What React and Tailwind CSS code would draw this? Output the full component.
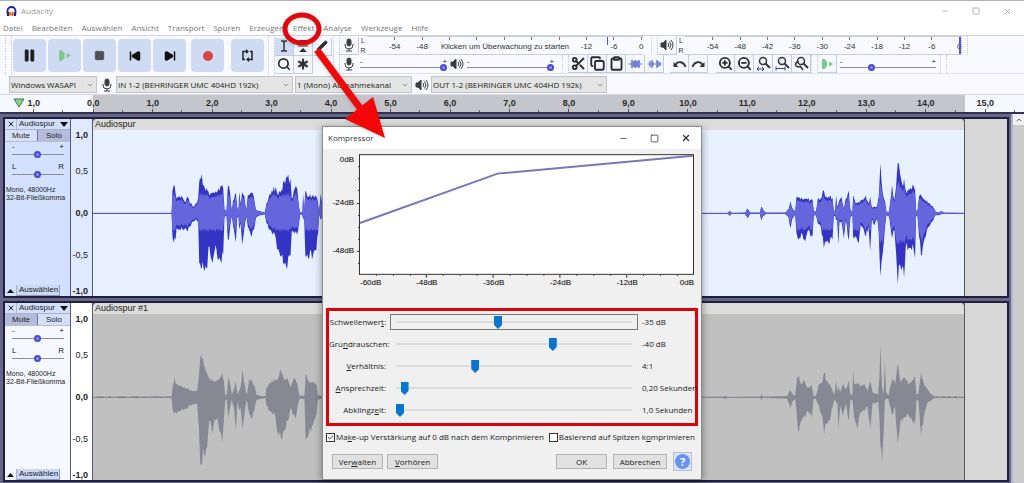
import React from 'react';
import {
    Asterisk, Check, ChevronDown, ChevronUp, Clipboard, Copy, Minus, Pencil, Pause, Scissors, Search,
    SkipBack, SkipForward, Square, X, ZoomIn, ZoomOut,
} from 'lucide-react';

const MENU = ['Datei', 'Bearbeiten', 'Auswählen', 'Ansicht', 'Transport', 'Spuren', 'Erzeugen', 'Effekt', 'Analyse', 'Werkzeuge', 'Hilfe'];

const SECONDS = ['1,0', '0,0', '1,0', '2,0', '3,0', '4,0', '5,0', '6,0', '7,0', '8,0', '9,0', '10,0', '11,0', '12,0', '13,0', '14,0', '15,0'];

const METER_DB = ['-54', '-48', '-42', '-36', '-30', '-24', '-18', '-12', '-6', '0'];

// Envelope points: [x, level above zero, level below zero]
const SELECTED_WAVE = [
    [279, 1, 1], [515, 1, 1], [518, 70, 75], [522, 87, 88], [527, 60, 80], [530, 45, 45], [536, 50, 50], [548, 48, 48],
    [555, 35, 45], [563, 50, 55], [570, 30, 40], [575, 30, 30], [580, 20, 25], [590, 30, 20], [595, 45, 25], [598, 95, 150],
    [606, 120, 165], [611, 85, 165], [614, 80, 175], [622, 70, 165], [626, 65, 100], [632, 60, 130], [638, 62, 150],
    [644, 60, 115], [650, 62, 110], [656, 75, 140], [665, 82, 150], [670, 75, 125], [674, 10, 10], [680, 8, 8], [684, 80, 80],
    [687, 85, 80], [691, 60, 40], [696, 8, 8], [700, 40, 40], [708, 62, 88], [712, 20, 15], [716, 8, 8], [718, 65, 50],
    [722, 30, 30], [727, 65, 95], [733, 55, 50], [740, 10, 10], [744, 55, 40], [748, 55, 50], [755, 62, 72], [762, 50, 50],
    [768, 12, 15], [775, 8, 8], [795, 3, 3], [800, 30, 30], [810, 60, 50], [828, 80, 75], [832, 60, 110], [845, 70, 130],
    [850, 95, 150], [862, 108, 168], [872, 105, 130], [876, 45, 55], [885, 75, 60], [892, 75, 65], [898, 20, 30], [901, 4, 4],
    [908, 4, 4], [910, 60, 20], [913, 8, 10], [917, 70, 130], [925, 52, 135], [940, 55, 125], [950, 50, 110], [955, 30, 60],
    [958, 3, 3], [963, 60, 20], [970, 2, 2], [2185, 1, 1], [2192, 8, 8], [2197, 1, 1], [2237, 2, 2], [2245, 14, 14],
    [2253, 2, 2], [2282, 2, 2], [2286, 20, 22], [2292, 10, 8], [2300, 2, 2], [2358, 2, 2], [2368, 12, 12], [2374, 36, 45],
    [2380, 15, 15], [2388, 5, 5], [2392, 50, 60], [2397, 48, 80], [2410, 42, 65], [2418, 44, 85], [2425, 42, 55], [2440, 42, 70],
    [2444, 6, 6], [2450, 6, 6], [2456, 45, 30], [2465, 45, 40], [2474, 70, 105], [2478, 50, 85], [2488, 52, 90], [2500, 48, 80],
    [2504, 8, 8], [2508, 8, 8], [2511, 55, 20], [2514, 20, 20], [2518, 30, 95], [2521, 40, 25], [2527, 50, 25], [2534, 15, 75],
    [2540, 45, 20], [2549, 68, 82], [2554, 10, 10], [2560, 5, 5], [2562, 55, 70], [2570, 30, 70], [2579, 35, 90], [2585, 40, 35],
    [2594, 45, 50], [2600, 55, 70], [2608, 30, 40], [2613, 50, 115], [2618, 20, 20], [2626, 20, 35], [2634, 20, 15],
    [2639, 50, 60], [2644, 152, 190], [2651, 60, 120], [2658, 35, 40], [2662, 5, 5], [2670, 5, 10], [2679, 85, 75],
    [2686, 40, 50], [2691, 80, 120], [2696, 152, 215], [2703, 120, 155], [2710, 85, 160], [2715, 105, 195], [2720, 70, 100],
    [2732, 72, 105], [2744, 82, 110], [2748, 70, 135], [2751, 10, 10], [2755, 5, 5], [2760, 50, 70], [2766, 55, 128],
    [2774, 42, 85], [2790, 32, 40], [2803, 18, 20], [2810, 5, 5], [2820, 2, 6], [2828, 8, 2], [2834, 2, 2], [2895, 1, 1],
];

const MUTED_WAVE = [
    [279, 1, 1], [515, 2, 2], [518, 30, 35], [524, 60, 50], [530, 40, 48], [545, 35, 38], [560, 28, 35], [572, 22, 25],
    [585, 18, 20], [592, 20, 22], [597, 60, 90], [601, 120, 200], [604, 130, 205], [612, 100, 170], [622, 70, 150],
    [628, 55, 70], [637, 55, 110], [645, 50, 65], [655, 50, 75], [667, 75, 135], [672, 50, 70], [676, 8, 8], [681, 8, 8],
    [685, 60, 62], [690, 45, 35], [696, 8, 8], [702, 25, 30], [708, 50, 100], [713, 10, 12], [718, 20, 40], [722, 30, 30],
    [728, 85, 95], [735, 35, 40], [741, 8, 8], [748, 52, 50], [757, 52, 65], [766, 30, 25], [770, 8, 8], [783, 4, 4],
    [797, 3, 3], [800, 30, 25], [810, 45, 42], [827, 55, 60], [832, 50, 105], [843, 82, 122], [855, 55, 100], [864, 55, 72],
    [873, 30, 30], [880, 52, 55], [887, 55, 65], [893, 40, 30], [899, 5, 5], [914, 5, 5], [918, 70, 130], [927, 50, 110],
    [940, 45, 80], [950, 40, 50], [954, 8, 8], [970, 2, 2], [2107, 1, 1], [2172, 2, 2], [2178, 5, 5], [2184, 1, 1], [2283, 2, 2],
    [2287, 10, 8], [2290, 2, 2], [2364, 4, 4], [2373, 22, 32], [2380, 10, 12], [2388, 5, 5], [2394, 60, 70], [2399, 65, 105],
    [2406, 40, 70], [2415, 50, 60], [2425, 28, 40], [2438, 35, 60], [2443, 5, 5], [2450, 5, 5], [2460, 40, 30], [2470, 45, 60],
    [2475, 75, 112], [2483, 50, 80], [2492, 40, 70], [2500, 20, 30], [2505, 6, 6], [2511, 50, 15], [2515, 15, 20],
    [2518, 35, 95], [2524, 15, 25], [2531, 40, 55], [2540, 25, 20], [2549, 50, 70], [2554, 8, 8], [2560, 8, 8], [2562, 85, 30],
    [2565, 40, 60], [2574, 45, 95], [2585, 35, 45], [2595, 42, 40], [2605, 20, 30], [2614, 50, 95], [2620, 15, 20],
    [2637, 10, 15], [2641, 60, 60], [2644, 160, 150], [2649, 30, 198], [2654, 10, 100], [2657, 110, 10], [2661, 15, 5],
    [2668, 5, 5], [2679, 60, 55], [2688, 40, 30], [2696, 102, 140], [2704, 50, 75], [2715, 60, 60], [2730, 42, 58],
    [2748, 60, 85], [2752, 8, 8], [2758, 10, 10], [2766, 78, 115], [2774, 45, 60], [2784, 25, 20], [2800, 6, 6], [2810, 2, 2],
    [2895, 1, 1],
];

const JITTER = [1, 0.88, 1.04, 0.93, 1.1, 0.85, 0.98];

// Fills in samples between the envelope points so that the edge looks ragged
const sampleWave = (points) => {
    const samples = [];
    points.slice(1).forEach(([x2, up2, down2], i) => {
        const [x1, up1, down1] = points[i];
        const quiet = up1 < 4 && up2 < 4;
        const steps = quiet ? 1 : Math.max(1, Math.round((x2 - x1) / 3));
        for (let s = 0; s < steps; s += 1) {
            const t = s / steps;
            const n = samples.length;
            samples.push([
                x1 + (x2 - x1) * t,
                (up1 + (up2 - up1) * t) * (s ? JITTER[n % 7] : 1),
                (down1 + (down2 - down1) * t) * (s ? JITTER[(n * 3) % 7] : 1),
            ]);
        }
    });
    samples.push(points[points.length - 1]);
    return samples;
};

const outline = (samples) => {
    const top = samples.map(([x, up]) => `${x} ${-up}`);
    const bottom = samples.map(([x, , down]) => `${x} ${down}`).reverse();
    return `M${top.concat(bottom).join('L')}Z`;
};

const rms = (samples) => samples.map(([x, up, down], i) => {
    const loud = x > 2640;
    const wobble = JITTER[i % 7];
    return [x, Math.min(up * 0.8, (loud ? 90 : 58) * wobble), Math.min(down * 0.75, (loud ? 90 : 52) * wobble)];
});

const Waveform = ({ points, selected }) => {
    const samples = sampleWave(points);
    return (
        <svg className="absolute inset-0 w-full h-full" viewBox="279 -252 2616 502" preserveAspectRatio="none">
            <line x1="279" x2="2895" y1="0" y2="0" stroke={selected ? '#5252b8' : '#8a8a92'} strokeWidth="3" />
            {!selected && <line x1="290" x2="515" y1="0" y2="0" stroke="#505054" strokeWidth="4" strokeDasharray="22 14 6 22 24 16" />}
            {!selected && <line x1="2810" x2="2885" y1="0" y2="0" stroke="#505054" strokeWidth="4" strokeDasharray="10 8" />}
            <path d={outline(samples)} fill={selected ? '#3333c4' : '#888894'} />
            {selected && <path d={outline(rms(samples))} fill="#6666dc" />}
        </svg>
    );
};

const MicIcon = () => (
    <svg className="w-[14px] h-[14px]" viewBox="0 0 14 14" fill="none" stroke="#3c3c3c">
        <rect x="5" y="1" width="4" height="7" rx="2" fill="#3c3c3c" />
        <path d="M3 6v1a4 4 0 0 0 8 0V6M7 11v2M4 13h6" />
    </svg>
);

const SpeakerIcon = () => (
    <svg className="w-[14px] h-[14px]" viewBox="0 0 14 14" fill="none" stroke="#3c3c3c">
        <path d="M1 5h2l3-3v10L3 9H1z" fill="#3c3c3c" />
        <path d="M8 5q1.500 2 0 4M9.500 3.500q3 3.500 0 7M11 2q4 5 0 10" />
    </svg>
);

const PlayAtSpeedIcon = ({ className }) => (
    <svg className={className} viewBox="0 0 14 14" fill="#7cc98a">
        <path d="M2 2h3v10H2zM5 3l2 1.500v5L5 11zM9 4.500l4 2.500-4 2.500z" />
    </svg>
);

const TrimIcon = ({ silence }) => (
    <svg className="w-[15px] h-[14px]" viewBox="0 0 14 14" stroke="#6f7fd0" strokeWidth="1">
        <path d="M0 7h14" />
        {silence
            ? <path d="M2.500 4v6M4.500 3v8M5.500 5v4M9.500 3v8M10.500 4v6M12.500 5v4" strokeWidth="1.500" />
            : <path d="M3.500 3v8M5.500 4v6M7 3v8M8.500 4v6M10.500 3v8" strokeWidth="1.800" />}
    </svg>
);

const UndoIcon = ({ redo }) => (
    <svg className="w-[15px] h-[14px]" viewBox="0 0 14 14" fill="none" stroke="#333">
        <g transform={redo ? 'matrix(-1 0 0 1 14 0)' : undefined}>
            <path d="M3 8c2-4 8-4 10 2" strokeWidth="1.800" />
            <path d="M1 5v5h5z" fill="#333" stroke="none" />
        </g>
    </svg>
);

const ZoomFitIcon = ({ kind }) => (
    <svg className="w-[15px] h-[15px]" viewBox="0 0 15 15" fill="none" stroke="#333" strokeWidth="1.500">
        <circle cx="7" cy="5" r="3.500" />
        <path d="M9.500 7.500 14 12" strokeWidth="2" />
        {kind === 'selection' && <path d="M1 13h7M3 11l-2 2 2 2M6 11l2 2-2 2" stroke="#3a3ab8" strokeWidth="1" />}
        {kind === 'project' && <path d="M1 10.500v4M10 10.500v4M1 12.500h9" stroke="#3a3ab8" strokeWidth="1" />}
        {kind === 'toggle' && <path d="M5 6a2.500 2.500 0 1 0 1 4M6 10l3 4" strokeWidth="1.500" />}
    </svg>
);

const Grip = () => <div className="w-[7px] shrink-0 self-stretch border-x border-dotted border-[#c4c9d6]" />;

const TransportButton = ({ label, children }) => (
    <button type="button" aria-label={label} className="w-[33px] h-[33px] rounded-sm bg-[#cfdbf3] flex items-center justify-center">
        {children}
    </button>
);

const ToolButton = ({ label, active, children }) => (
    <button
        type="button"
        aria-label={label}
        className={`w-[19px] h-[18px] shrink-0 border-r border-b border-[#c3cbe0] flex items-center justify-center ${active ? 'bg-[#cfdbf3]' : 'bg-[#f5f8ff]'}`}
    >
        {children}
    </button>
);

const KnobSlider = ({ label, value, className }) => (
    <input
        type="range"
        aria-label={label}
        defaultValue={value}
        className={`appearance-none bg-transparent h-2 block [&::-webkit-slider-runnable-track]:h-px [&::-webkit-slider-runnable-track]:bg-[#8b8d9c] [&::-webkit-slider-thumb]:appearance-none [&::-webkit-slider-thumb]:w-[7px] [&::-webkit-slider-thumb]:h-[7px] [&::-webkit-slider-thumb]:-mt-[3px] [&::-webkit-slider-thumb]:rounded-full [&::-webkit-slider-thumb]:bg-[#9090e8] [&::-webkit-slider-thumb]:border-2 [&::-webkit-slider-thumb]:border-[#4a4acc] ${className}`}
    />
);

const LabelledKnob = ({ label, value, low = '-', high = '+', className }) => (
    <div className={className}>
        <div className="flex justify-between text-[8px] leading-[7px] text-[#222]">
            <span>{low}</span>
            <span>{high}</span>
        </div>
        <KnobSlider label={label} value={value} className="w-full" />
    </div>
);

const Meter = ({ recording }) => (
    <div className="flex items-stretch h-[19px] font-['Liberation_Sans',sans-serif] text-[8px] text-[#333]">
        <div className="flex flex-col justify-between w-[8px] text-[7px] leading-[9px] text-center">
            <span>L</span>
            <span>R</span>
        </div>
        <div className="relative w-[276px] border-y border-[#c9cdd8]">
            <div className="grid grid-cols-10 pl-[14px] -mr-[12px]">
                {METER_DB.map((db, i) => (
                    <div key={db} className="flex flex-col items-center leading-[9px]">
                        <span className="w-px h-[3px] bg-[#777]" />
                        <span className={recording && i > 1 && i < 7 ? 'invisible' : 'mt-[2px]'}>{db}</span>
                    </div>
                ))}
            </div>
            {recording && (
                <span className="absolute inset-x-0 top-[5px] text-center whitespace-nowrap leading-[9px]">Klicken um Überwachung zu starten</span>
            )}
            <span className={`absolute top-0 bg-[#5555c4] ${recording ? 'right-[35px] w-px h-2' : 'right-0 w-[2px] h-full'}`} />
        </div>
    </div>
);

const DeviceSelect = ({ label, value, className }) => (
    <div className={`relative shrink-0 ${className}`}>
        <select aria-label={label} className="appearance-none block w-full h-[17px] pl-px bg-[#e4e4e4] border border-[#c4c4c4] text-[8px] text-[#222]">
            <option>{value}</option>
        </select>
        <ChevronDown className="absolute right-[3px] top-[5px] w-[8px] h-[8px] text-[#666] pointer-events-none" />
    </div>
);

const Toolbars = () => (
    <div className="flex border-t border-[#d0d3dc] bg-[#f8faff]">
        <div className="flex items-center h-[39px] pl-[5px]">
            <Grip />
            <div className="flex gap-[2px] pl-px">
                <TransportButton label="Pause"><Pause className="w-[15px] h-[15px] text-[#1c1c1c]" fill="currentColor" strokeWidth={1} /></TransportButton>
                <TransportButton label="Wiedergabe"><PlayAtSpeedIcon className="w-[15px] h-[15px]" /></TransportButton>
                <TransportButton label="Stopp"><Square className="w-[11px] h-[11px] text-[#505050]" fill="currentColor" /></TransportButton>
                <TransportButton label="Zum Anfang"><SkipBack className="w-[12px] h-[12px] text-[#111]" fill="currentColor" strokeWidth={3} /></TransportButton>
                <TransportButton label="Zum Ende"><SkipForward className="w-[12px] h-[12px] text-[#111]" fill="currentColor" strokeWidth={3} /></TransportButton>
            </div>
            <div className="flex gap-[7px] pl-[5px]">
                <TransportButton label="Aufnahme"><span className="w-[10px] h-[10px] rounded-full bg-[#de4444]" /></TransportButton>
                <TransportButton label="Schleife">
                    <svg className="w-[13px] h-[13px]" viewBox="0 0 13 13" fill="none" stroke="#222" strokeWidth="1.500">
                        <path d="M5 2.500H2v8h2M8 10.500h3v-8H9" />
                        <path d="M5 0v5l3-2.500zM8 8v5l-3-2.500z" fill="#222" stroke="none" />
                    </svg>
                </TransportButton>
            </div>
        </div>
        <div className="flex pl-[4px]">
            <Grip />
            <div className="grid grid-cols-3 content-center w-[57px]">
                <ToolButton label="Auswahlwerkzeug" active>
                    <svg className="w-[12px] h-[14px]" viewBox="0 0 12 14" fill="none" stroke="#333" strokeWidth="1.500">
                        <path d="M3 2h2l1 1 1-1h2M6 3v8M3 12h2l1-1 1 1h2" />
                    </svg>
                </ToolButton>
                <ToolButton label="Hüllkurvenwerkzeug">
                    <svg className="w-[12px] h-[14px]" viewBox="0 0 12 14" fill="#333">
                        <path d="M2 1h8L6 5zM2 13h8L6 9zM1 6.500h10v1H1z" />
                    </svg>
                </ToolButton>
                <ToolButton label="Zeichenwerkzeug"><Pencil className="w-[12px] h-[12px] text-[#333]" fill="currentColor" /></ToolButton>
                <ToolButton label="Zoomwerkzeug"><Search className="w-[14px] h-[14px] text-[#333]" strokeWidth={3} /></ToolButton>
                <ToolButton label="Multiwerkzeug"><Asterisk className="w-[18px] h-[18px] text-[#333]" strokeWidth={3} /></ToolButton>
            </div>
        </div>
        <div className="flex-1 min-w-0 pl-px">
            <div className="flex items-center h-[19px]">
                <Grip />
                <ToolButton label="Aufnahmepegel"><MicIcon /></ToolButton>
                <Meter recording />
                <span className="w-2" />
                <Grip />
                <ToolButton label="Wiedergabepegel"><SpeakerIcon /></ToolButton>
                <Meter />
                <Grip />
            </div>
            <div className="flex items-center h-[19px] border-b border-[#dfe2ea]">
                <Grip />
                <span className="pl-[2px]"><MicIcon /></span>
                <LabelledKnob label="Aufnahmelautstärke" value={100} className="w-[87px] ml-[4px] mr-[3px]" />
                <span><SpeakerIcon /></span>
                <LabelledKnob label="Wiedergabelautstärke" value={100} className="w-[87px] ml-[3px] mr-[8px]" />
                <Grip />
                <ToolButton label="Ausschneiden"><Scissors className="w-[15px] h-[15px] text-[#2c2c2c]" strokeWidth={3} /></ToolButton>
                <ToolButton label="Kopieren"><Copy className="w-[15px] h-[15px] text-[#2c2c2c]" strokeWidth={3} /></ToolButton>
                <ToolButton label="Einfügen"><Clipboard className="w-[15px] h-[15px] text-[#2c2c2c]" strokeWidth={3} /></ToolButton>
                <ToolButton label="Trimmen"><TrimIcon /></ToolButton>
                <ToolButton label="Stille"><TrimIcon silence /></ToolButton>
                <span className="w-[6px]" />
                <ToolButton label="Rückgängig"><UndoIcon /></ToolButton>
                <ToolButton label="Wiederholen"><UndoIcon redo /></ToolButton>
                <span className="w-[8px]" />
                <ToolButton label="Vergrößern"><ZoomIn className="w-[15px] h-[15px] text-[#2c2c2c]" strokeWidth={3} /></ToolButton>
                <ToolButton label="Verkleinern"><ZoomOut className="w-[15px] h-[15px] text-[#2c2c2c]" strokeWidth={3} /></ToolButton>
                <ToolButton label="Auswahl einpassen"><ZoomFitIcon kind="selection" /></ToolButton>
                <ToolButton label="Projekt einpassen"><ZoomFitIcon kind="project" /></ToolButton>
                <ToolButton label="Zoom umschalten"><ZoomFitIcon kind="toggle" /></ToolButton>
                <Grip />
                <ToolButton label="Mit Tempo abspielen"><PlayAtSpeedIcon className="w-[14px] h-[14px]" /></ToolButton>
                <LabelledKnob label="Wiedergabetempo" value={32} className="w-[96px] ml-[3px] mr-[4px]" />
                <Grip />
            </div>
        </div>
    </div>
);

const DeviceBar = () => (
    <div className="flex items-center h-[19px] pl-[9px] bg-[#f8faff]">
        <DeviceSelect label="Audio-Host" value="Windows WASAPI" className="w-[88px]" />
        <span className="flex justify-center w-[19px]"><MicIcon /></span>
        <DeviceSelect label="Aufnahmegerät" value="IN 1-2 (BEHRINGER UMC 404HD 192k)" className="w-[177px]" />
        <DeviceSelect label="Aufnahmekanäle" value="1 (Mono) Aufnahmekanal" className="w-[117px] ml-[2px]" />
        <span className="flex justify-center w-[19px]"><SpeakerIcon /></span>
        <DeviceSelect label="Wiedergabegerät" value="OUT 1-2 (BEHRINGER UMC 404HD 192k)" className="w-[176px]" />
    </div>
);

const TimeRuler = () => (
    <div className="relative flex h-[20px] border-t border-b-2 border-t-[#d5d8e2] border-b-[#33334d] bg-[#f6f8ff] font-['Liberation_Sans',sans-serif]">
        <div className="w-[93px] pl-[13px] pt-[3px]">
            <svg className="w-[12px] h-[10px]" viewBox="0 0 12 10">
                <path d="M1 1h10L6 9z" fill="#8fd08f" stroke="#3c7a46" />
            </svg>
        </div>
        <div className="flex-1 bg-[#c4c6cc]" />
        <div className="w-[59px]" />
        <div className="absolute inset-y-0 left-[4px] right-[9px] grid grid-cols-17">
            {SECONDS.map((label, i) => (
                <div key={i} className="relative flex flex-col items-center justify-between text-[9px] leading-[10px] font-bold text-[#2b2b2b] pt-[3px]">
                    <span>{label}</span>
                    <span className="w-px h-[3px] bg-[#555]" />
                    <span className="absolute right-0 bottom-0 w-px h-[2px] bg-[#666]" />
                </div>
            ))}
        </div>
    </div>
);

const Track = ({ clipName, selected, muted, points }) => (
    <section className="flex border-2 border-[#20203a] font-['Liberation_Sans',sans-serif] text-[8px] text-[#222]">
        <div className={`flex flex-col w-[65px] shrink-0 ${selected ? 'bg-[#d3e1ff]' : 'bg-[#f6f8ff]'}`}>
            <div className="flex items-center h-[11px] bg-[#d3dff8] border-b border-[#a9b3cf]">
                <button type="button" aria-label="Spur schließen" className="w-[12px] h-full flex items-center justify-center border-r border-[#a9b3cf]">
                    <X className="w-[8px] h-[8px]" strokeWidth={3} />
                </button>
                <button type="button" className="flex flex-1 items-center justify-between pl-[2px] pr-[2px] h-full leading-[10px]">
                    Audiospur
                    <svg className="w-[8px] h-[5px]" viewBox="0 0 8 5"><path d="M0 0h8L4 5z" fill="#111" /></svg>
                </button>
            </div>
            <div className="flex h-[12px] leading-[11px] border-b border-[#b5bdd4]">
                <button type="button" className={`flex-1 ${muted ? 'bg-[#b4bcdc]' : 'bg-[#d3e0f8]'}`}>Mute</button>
                <button type="button" className={`flex-1 border-l border-[#707890] ${muted ? 'bg-[#d3e0f8]' : 'bg-[#b4bcdc]'}`}>Solo</button>
            </div>
            <LabelledKnob label="Verstärkung" value={48} className="w-[52px] ml-[7px] mt-px" />
            <LabelledKnob label="Balance" value={48} low="L" high="R" className="w-[52px] ml-[7px] mt-[5px]" />
            <div className="mt-[8px] pl-px text-[7px] leading-[8px] whitespace-nowrap">
                <div>Mono, 48000Hz</div>
                <div>32-Bit-Fließkomma</div>
            </div>
            <div className="flex mt-auto h-[11px] leading-[10px]">
                <button type="button" aria-label="Spur einklappen" className="w-[12px] flex items-center justify-center border-r border-[#a9b3cf]">
                    <svg className="w-[7px] h-[4px]" viewBox="0 0 7 4"><path d="M0 4h7L3.500 0z" fill="#111" /></svg>
                </button>
                <button type="button" className="pl-[2px] pr-px bg-[#cbd8f5] border-b border-r border-[#8f9ab8]">Auswählen</button>
            </div>
        </div>
        <div className={`w-[23px] shrink-0 pt-[11px] pr-[4px] border-x border-[#555a70] text-[9px] leading-[10px] text-right ${selected ? 'bg-[#e0eaff]' : 'bg-white'}`}>
            <div className="h-[36px] font-bold">1,0</div>
            <div className="h-[42px]">0,5</div>
            <div className="h-[42px] font-bold">0,0</div>
            <div className="h-[36px]">-0,5</div>
            <div className="font-bold">-1,0</div>
        </div>
        <div className="flex flex-col flex-1 min-w-0 rounded-t-[4px] border-r border-[#555] overflow-hidden">
            <div className="h-[11px] pl-[2px] bg-[#dcdcda] text-[9px] leading-[11px]">{clipName}</div>
            <div className={`relative h-[166px] ${selected ? 'bg-[#e8f1ff]' : 'bg-[#c0c0c0]'}`}>
                <Waveform points={points} selected={selected} />
            </div>
        </div>
        <div className="w-[42px] shrink-0 bg-[#d6d7d6]" />
    </section>
);

const X_DB = ['-48dB', '-36dB', '-24dB', '-12dB'];

const CompressorChart = () => (
    <div className="flex pl-[9px] pr-[7px] pt-[5px] font-['Liberation_Sans',sans-serif] text-[8px] leading-[10px] text-black">
        <div className="w-[25px] shrink-0 pr-[3px] pt-px text-right">
            <div className="h-[43px]">0dB</div>
            <div className="h-[48px]">-24dB</div>
            <div>-48dB</div>
        </div>
        <div className="flex-1">
            <svg className="block w-full h-[124px]" viewBox="0 0 338 124">
                <rect x="2.500" y="0.500" width="335" height="120" fill="#fff" stroke="#333" />
                <path d="M0 49.500h2M0 97.500h2M1 12.500h1M1 24.500h1M1 36.500h1M1 61.500h1M1 73.500h1M1 85.500h1M1 109.500h1" stroke="#333" />
                <path d="M69.500 121v3M136.500 121v3M203.500 121v3M270.500 121v3M19.500 121v1M36.500 121v1M53.500 121v1M86.500 121v1M103.500 121v1M120.500 121v1M153.500 121v1M170.500 121v1M187.500 121v1M220.500 121v1M237.500 121v1M254.500 121v1M287.500 121v1M304.500 121v1M321.500 121v1" stroke="#333" />
                <path d="M3 69 141 19.500 337 1.500" fill="none" stroke="#7777bb" strokeWidth="2" />
            </svg>
            <div className="grid grid-cols-10 pl-[3px] text-center">
                <span className="text-left">-60dB</span>
                {X_DB.map((db) => <span key={db} className="col-span-2">{db}</span>)}
                <span className="text-right">0dB</span>
            </div>
        </div>
    </div>
);

// "mark" is the underlined access key, with the text before and after it
const CONTROLS = [
    { id: 'threshold', before: 'Schwellenwer', mark: 't', after: ':', value: 43, text: '-35 dB', focused: true },
    { id: 'floor', before: 'Gru', mark: 'n', after: 'drauschen:', value: 67, text: '-40 dB' },
    { id: 'ratio', before: '', mark: 'V', after: 'erhältnis:', value: 33, text: '4:1' },
    { id: 'attack', before: '', mark: 'A', after: 'nsprechzeit:', value: 2, text: '0,20 Sekunden' },
    { id: 'release', before: 'Abklingz', mark: 'e', after: 'it:', value: 0, text: '1,0 Sekunden' },
];

const ControlRow = ({ id, before, mark, after, value, text, focused }) => (
    <div className="flex items-center h-[22px]">
        <label htmlFor={id} className="w-[57px] shrink-0 text-right">{before}<u>{mark}</u>{after}</label>
        <div className={`flex items-center flex-1 h-[16px] mx-[4px] px-[5px] border ${focused ? 'border-[#777]' : 'border-transparent'}`}>
            <input
                id={id}
                type="range"
                defaultValue={value}
                className="appearance-none block w-full h-[14px] bg-transparent [&::-webkit-slider-runnable-track]:h-[2px] [&::-webkit-slider-runnable-track]:bg-[#dcdcdc] [&::-webkit-slider-thumb]:appearance-none [&::-webkit-slider-thumb]:w-[8px] [&::-webkit-slider-thumb]:h-[13px] [&::-webkit-slider-thumb]:-mt-[5px] [&::-webkit-slider-thumb]:bg-[#0a74cf] [&::-webkit-slider-thumb]:[clip-path:polygon(0_0,100%_0,100%_70%,50%_100%,0_70%)]"
            />
        </div>
        <output htmlFor={id} className="w-[53px] shrink-0">{text}</output>
    </div>
);

const DialogButton = ({ className, children }) => (
    <button type="button" className={`h-[15px] bg-[#e1e1e1] border border-[#b4b4b4] leading-[12px] ${className}`}>{children}</button>
);

const CompressorDialog = () => (
    <div role="dialog" aria-label="Kompressor" className="absolute left-[322px] top-[125px] w-[380px] bg-[#f0f0f0] border border-[#8c8c8c] shadow-[0_2px_8px_rgba(0,0,0,0.4)] whitespace-nowrap">
        <div className="flex items-center justify-between h-[22px] pl-[5px] pr-[10px] bg-white text-[#333]">
            <span>Kompressor</span>
            <div className="flex gap-[22px] text-[#333]">
                <button type="button" aria-label="Minimieren"><Minus className="w-[9px] h-[9px]" /></button>
                <button type="button" aria-label="Maximieren"><Square className="w-[9px] h-[9px]" /></button>
                <button type="button" aria-label="Schließen"><X className="w-[10px] h-[10px]" strokeWidth={3} /></button>
            </div>
        </div>
        <CompressorChart />
        <div className="mx-[3px] mt-[20px] border-[3px] border-[#d8060c] pb-[2px]">
            {CONTROLS.map((row) => <ControlRow key={row.id} {...row} />)}
        </div>
        <div className="flex justify-between pl-[3px] pr-[6px] mt-[5px] h-[12px] leading-[12px]">
            <label className="relative flex items-center gap-px">
                <input type="checkbox" defaultChecked className="appearance-none w-[9px] h-[9px] bg-white border border-[#333]" />
                <Check className="absolute left-px w-[7px] h-[7px] text-[#222]" strokeWidth={3} />
                <span>Ma<u>k</u>e-up Verstärkung auf 0 dB nach dem Komprimieren</span>
            </label>
            <label className="flex items-center gap-px">
                <input type="checkbox" className="appearance-none w-[9px] h-[9px] bg-white border border-[#333]" />
                <span>Basierend auf Spitzen k<u>o</u>mprimieren</span>
            </label>
        </div>
        <div className="flex items-center pl-[9px] pr-[9px] mt-[9px] mb-[8px]">
            <DialogButton className="w-[51px]">Ver<u>w</u>alten</DialogButton>
            <DialogButton className="w-[51px] ml-[4px]"><u>V</u>orhören</DialogButton>
            <DialogButton className="w-[51px] ml-auto">OK</DialogButton>
            <DialogButton className="w-[54px] ml-[6px]">Abbrechen</DialogButton>
            <button type="button" aria-label="Hilfe" className="w-[19px] h-[19px] ml-[6px] flex items-center justify-center bg-[#dde3f2] border border-[#b8bfd0]">
                <span className="w-[15px] h-[15px] rounded-full bg-[#6495ed] text-white text-[11px] leading-[15px] font-bold">?</span>
            </button>
        </div>
    </div>
);

const Annotation = () => (
    <svg className="absolute left-[280px] top-[7px] w-[110px] h-[134px] pointer-events-none drop-shadow-sm" viewBox="280 8 110 134">
        <ellipse cx="302" cy="29" rx="17" ry="14" fill="none" stroke="#dc0a10" strokeWidth="5" />
        <path d="M317 50 360 108" stroke="#ee0a0a" strokeWidth="7" />
        <path d="M345 119 373 97 385 138z" fill="#f40606" />
    </svg>
);

const App = () => (
    <div className="relative w-full overflow-hidden bg-white border-t border-[#b0b0b0] font-['Open_Sans','Noto_Sans',sans-serif] text-[8px] text-[#222]">
        <header className="flex items-center justify-between h-[20px] pl-[6px] pr-[12px] text-[#999]">
            <div className="flex items-center gap-[4px]">
                <svg className="w-[11px] h-[11px]" viewBox="0 0 11 11" fill="none">
                    <path d="M1.500 8V5a4 4 0 0 1 8 0v3" stroke="#1a1f9c" strokeWidth="1.800" />
                    <path d="M3 6.500h5v3H3z" fill="#f59a23" />
                    <path d="M4 5.500v4M6.500 6v4" stroke="#e04a2a" />
                    <path d="M1 6h2v4H1zM8 6h2v4H8z" fill="#1a1f9c" />
                </svg>
                <span>Audacity</span>
            </div>
            <div className="flex gap-[23px]">
                <button type="button" aria-label="Fenster minimieren"><Minus className="w-[8px] h-[8px]" /></button>
                <button type="button" aria-label="Fenster maximieren"><Square className="w-[8px] h-[8px]" /></button>
                <button type="button" aria-label="Fenster schließen"><X className="w-[9px] h-[9px]" /></button>
            </div>
        </header>
        <nav className="flex gap-[9px] pl-[3px] h-[14px] leading-[14px] text-[#777]">
            {MENU.map((item) => <button key={item} type="button">{item}</button>)}
        </nav>
        <Toolbars />
        <DeviceBar />
        <TimeRuler />
        <main className="flex bg-[#66668a]">
            <div className="flex-1 min-w-0 flex flex-col gap-[3px] pl-[3px] pr-[2px] pt-[3px] pb-[2px]">
                <Track clipName="Audiospur" selected points={SELECTED_WAVE} />
                <Track clipName="Audiospur #1" muted points={MUTED_WAVE} />
            </div>
            <div className="w-[13px] bg-[#cacacc] border-l-2 border-[#b4b4cc]">
                <button type="button" aria-label="Nach oben" className="w-full h-[11px] flex items-center justify-center bg-[#f0f0f0]">
                    <ChevronUp className="w-[8px] h-[8px]" />
                </button>
            </div>
        </main>
        <CompressorDialog />
        <Annotation />
    </div>
);

export default App;
